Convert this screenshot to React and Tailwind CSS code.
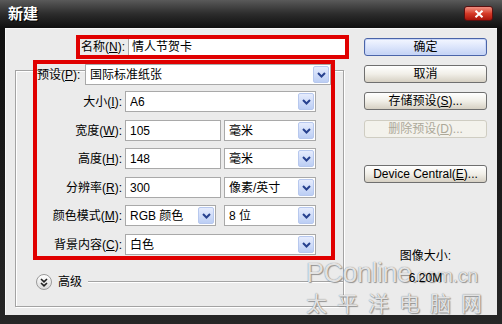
import React from 'react';

function Arrow() {
  return (
    <div className="w-[16px] h-[17px] shrink-0 rounded-[2px] border border-[#B7C8EE] bg-gradient-to-b from-[#E6ECFD] to-[#BCCEF4] flex items-center justify-center">
      <svg width="9" height="6" viewBox="0 0 9 6">
        <path d="M1 1L4.5 4.5L8 1" fill="none" stroke="#27418F" strokeWidth="2" />
      </svg>
    </div>
  );
}

function Select({ className, text }) {
  return (
    <div className={"h-[21px] bg-white border border-[#A9A9A9] flex items-center pl-[4px] pr-[1px] " + className}>
      <span className="flex-1 whitespace-nowrap overflow-hidden">{text}</span>
      <Arrow />
    </div>
  );
}

function Field({ className, text }) {
  return (
    <div className={"h-[21px] bg-white border border-[#A9A9A9] flex items-center pl-[4px] " + className}>
      {text}
    </div>
  );
}

function Label({ children }) {
  return <div className="w-[88px] shrink-0 text-right pr-[3px] whitespace-nowrap">{children}</div>;
}

function U({ children }) {
  return <span className="underline underline-offset-[1px]">{children}</span>;
}

function Btn({ children, kind, className }) {
  const base = "w-[123px] h-[18px] rounded-[3px] flex items-center justify-center whitespace-nowrap ";
  if (kind === 'default')
    return (
      <div className={base + "border border-[#4A64A8] bg-gradient-to-b from-[#F4F7FF] via-[#DCE5FB] to-[#C3D2F4] shadow-[inset_0_0_0_1px_#C8D6F8] " + className}>
        {children}
      </div>
    );
  if (kind === 'disabled')
    return (
      <div className={base + "border border-[#CFCDC2] bg-[#F3F2EC] text-[#ACA899] " + className}>{children}</div>
    );
  return (
    <div className={base + "border border-[#6F6F6F] bg-gradient-to-b from-[#FFFFFF] via-[#F1EFE8] to-[#D6D0C3] " + className}>
      {children}
    </div>
  );
}

export default function App() {
  return (
    <div className="w-[502px] h-[324px] bg-[#1e1e1e] flex flex-col relative overflow-hidden text-[12px] leading-[14px] text-black font-['Liberation_Sans','Noto_Sans_CJK_SC',sans-serif]">
      {/* title bar */}
      <div className="h-[28px] shrink-0 bg-gradient-to-b from-[#5a5a5a] via-[#2c2c2c] to-[#101010] flex items-center justify-between pl-[8px] pr-[9px]">
        <span className="text-white font-bold text-[15px] leading-[16px] [text-shadow:1px_1px_0_#000]">新建</span>
        <div className="w-[29px] h-[15px] mt-[-1px] rounded-[3px] border border-[#5a1010] bg-gradient-to-b from-[#EE8E80] via-[#D63A28] to-[#A81208] flex items-center justify-center">
          <svg width="10" height="8" viewBox="0 0 10 8">
            <path d="M1.5 0.8L8.5 7.2M8.5 0.8L1.5 7.2" stroke="#fff" strokeWidth="2" />
          </svg>
        </div>
      </div>

      {/* body */}
      <div className="flex-1 px-[5px] pb-[9px] bg-gradient-to-b from-[#101010] to-[#262626]">
        <div className="h-full bg-[#EBEBEB] flex border-l border-t border-[#F8F8F8]">
          {/* left column */}
          <div className="w-[344px] shrink-0 flex flex-col">
            {/* name row */}
            <div className="ml-[70px] mt-[6px] w-[273px] h-[24px] border-[4px] border-[#E00000] flex items-center">
              <div className="w-[48px] shrink-0 text-right pr-[3px] whitespace-nowrap">名称(<U>N</U>):</div>
              <div className="flex-1 h-full bg-white border-l border-[#A9A9A9] flex items-center pl-[3px]">情人节贺卡</div>
            </div>

            {/* group box */}
            <div className="ml-[9px] mt-[11px] w-[329px] h-[237px] border border-[#A3A3A3] shadow-[inset_1px_1px_0_#fff,1px_1px_0_#fff] flex flex-col">
              <div className="ml-[17px] mt-[-11px] w-[302px] h-[200px] border-[4px] border-[#E00000] flex flex-col">
                <div className="flex items-center">
                  <div className="w-[48px] shrink-0 whitespace-nowrap">预设(<U>P</U>):</div>
                  <Select className="w-[246px]" text="国际标准纸张" />
                </div>
                <div className="flex items-center mt-[6px]">
                  <Label>大小(<U>I</U>):</Label>
                  <Select className="w-[191px]" text="A6" />
                </div>
                <div className="flex items-center mt-[8px]">
                  <Label>宽度(<U>W</U>):</Label>
                  <Field className="w-[96px]" text="105" />
                  <Select className="w-[92px] ml-[3px]" text="毫米" />
                </div>
                <div className="flex items-center mt-[7px]">
                  <Label>高度(<U>H</U>):</Label>
                  <Field className="w-[96px]" text="148" />
                  <Select className="w-[92px] ml-[3px]" text="毫米" />
                </div>
                <div className="flex items-center mt-[8px]">
                  <Label>分辨率(<U>R</U>):</Label>
                  <Field className="w-[96px]" text="300" />
                  <Select className="w-[92px] ml-[3px]" text="像素/英寸" />
                </div>
                <div className="flex items-center mt-[7px]">
                  <Label>颜色模式(<U>M</U>):</Label>
                  <Select className="w-[91px]" text="RGB 颜色" />
                  <Select className="w-[92px] ml-[8px]" text="8 位" />
                </div>
                <div className="flex items-center mt-[8px]">
                  <Label>背景内容(<U>C</U>):</Label>
                  <Select className="w-[191px]" text="白色" />
                </div>
              </div>

              {/* advanced */}
              <div className="flex items-center ml-[20px] mt-[14px]">
                <div className="w-[16px] h-[16px] rounded-full border border-[#9A9A9A] bg-gradient-to-b from-[#FFFFFF] to-[#DADADA] flex items-center justify-center">
                  <svg width="8" height="9" viewBox="0 0 8 9">
                    <path d="M1 1L4 3.8L7 1M1 5L4 7.8L7 5" fill="none" stroke="#222" strokeWidth="1.6" />
                  </svg>
                </div>
                <span className="ml-[6px]">高级</span>
                <div className="flex-1 ml-[6px] h-[2px] border-t border-[#A3A3A3] border-b border-b-[#FFFFFF]" />
              </div>
            </div>
          </div>

          {/* right column */}
          <div className="flex flex-col pl-[14px] pt-[9px]">
            <Btn kind="default">确定</Btn>
            <Btn className="mt-[9px]">取消</Btn>
            <Btn className="mt-[9px]">存储预设(<U>S</U>)...</Btn>
            <Btn kind="disabled" className="mt-[10px]">删除预设(<U>D</U>)...</Btn>
            <Btn className="mt-[27px]">Device Central(<U>E</U>)...</Btn>
            <div className="mt-[66px] text-center w-[123px] relative z-10">图像大小:</div>
            <div className="mt-[8px] text-center w-[123px] relative z-10">6.20M</div>
          </div>
        </div>
      </div>

      {/* watermark */}
      <div className="absolute left-[306px] top-[259px] flex flex-col text-white/80 font-['Liberation_Sans',sans-serif] [text-shadow:0_0_1px_#666,1px_1px_1px_#999] pointer-events-none">
        <div className="flex items-baseline leading-[28px]">
          <span className="text-[27px] tracking-[-0.5px]">PConline</span>
          <span className="text-[19px]">.com.cn</span>
        </div>
        <div className="text-[21px] leading-[24px] tracking-[10px] font-['Noto_Sans_CJK_SC',sans-serif]">太平洋电脑网</div>
      </div>
    </div>
  );
}
